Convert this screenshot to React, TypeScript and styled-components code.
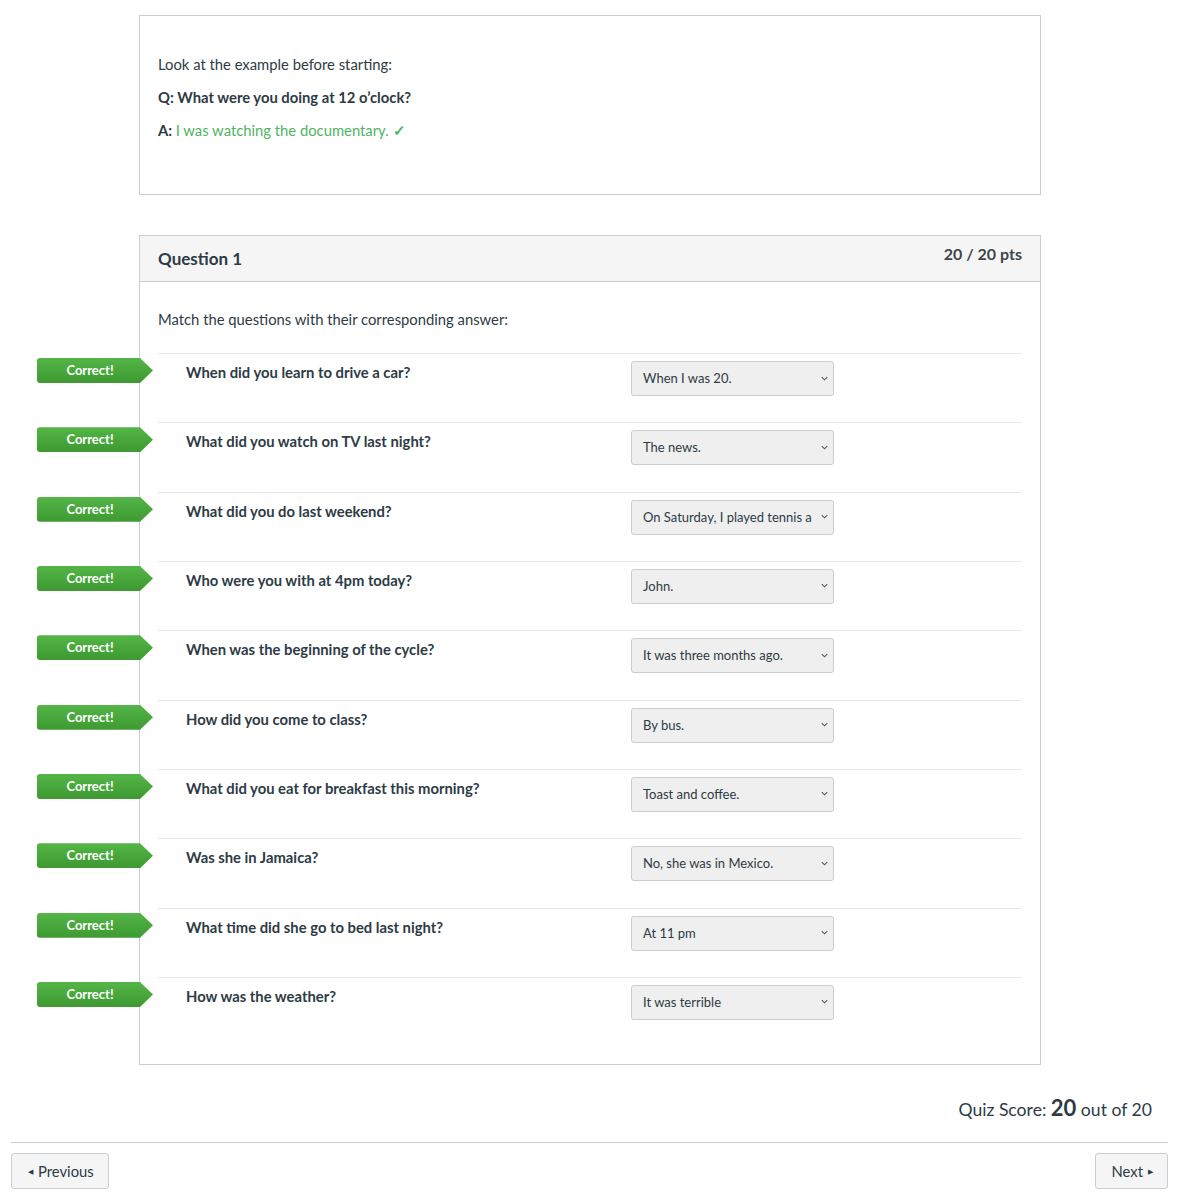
import styled, { createGlobalStyle } from "styled-components";

const GlobalStyle = createGlobalStyle`
  html, body {
    margin: 0;
    padding: 0;
    background: #fff;
  }
  body {
    font-family: Lato, "Liberation Sans", Arial, sans-serif;
    color: #2d3b45;
  }
  * { box-sizing: border-box; }
`;

// ─── Page ─────────────────────────────────────────────────────
const Page = styled.div`
  padding: 15px 32px 11px 11px;
`;

const Column = styled.div`
  margin-left: 128px;
  width: 902px;
  display: flex;
  flex-direction: column;
  gap: 40px;
`;

// ─── Example box ──────────────────────────────────────────────
const ExampleBox = styled.div`
  border: 1px solid #c7cdd1;
  padding: 37px 18px 42px;
  height: 180px;
`;

const Line = styled.p`
  margin: 0 0 11px;
  font-size: 14.8px;
  line-height: 22px;
`;

const Strong = styled.span`
  font-weight: 700;
`;

const Answer = styled.span`
  color: #4fb463;
`;

const Check = styled.span`
  font-weight: 700;
`;

// ─── Question box ─────────────────────────────────────────────
const QuestionBox = styled.div`
  border: 1px solid #c7cdd1;
`;

const Header = styled.div`
  display: flex;
  justify-content: space-between;
  align-items: flex-start;
  height: 46px;
  padding: 11px 18px 0;
  background: #f5f5f5;
  border-bottom: 1px solid #c7cdd1;
`;

const Title = styled.div`
  font-size: 17px;
  font-weight: 700;
  line-height: 24px;
  color: #2d3b45;
`;

const Points = styled.div`
  font-size: 16px;
  font-weight: 700;
  line-height: 20px;
  margin-top: -3px;
  color: #3d454c;
`;

const Body = styled.div`
  padding: 26px 18px 18px;
`;

const Prompt = styled.p`
  margin: 0 0 23px;
  font-size: 14.8px;
  line-height: 22px;
`;

const Row = styled.div`
  position: relative;
  display: grid;
  grid-template-columns: 473px 203px;
  height: 69.33px;
  border-top: 1px solid #e6e6e6;
  padding-top: 7px;
`;

const QText = styled.div`
  padding-left: 28px;
  font-size: 14.8px;
  font-weight: 700;
  line-height: 22px;
`;

const Select = styled.div`
  display: flex;
  align-items: center;
  justify-content: space-between;
  height: 35px;
  padding: 0 4px 1px 11px;
  background: #efefef;
  border: 1px solid #c7cdd1;
  border-radius: 3px;
  font-size: 13px;
  color: #2d3b45;
  white-space: nowrap;
`;

const Badge = styled.div`
  position: absolute;
  left: -121px;
  top: 4px;
  width: 116px;
  height: 25px;
  padding: 0 10px 1px 0;
  display: flex;
  align-items: center;
  justify-content: center;
  background: linear-gradient(#55b548, #3c9a30);
  clip-path: polygon(0 0, 103px 0, 100% 50%, 103px 100%, 0 100%);
  border-radius: 3px 0 0 3px;
  color: #fff;
  font-size: 13px;
  font-weight: 700;
`;

// ─── Footer ───────────────────────────────────────────────────
const Score = styled.div`
  text-align: right;
  padding: 30px 16px 19px 0;
  font-size: 17.6px;
  line-height: 26px;
  border-bottom: 1px solid #c7cdd1;
`;

const ScoreNum = styled.span`
  font-size: 22px;
  font-weight: 700;
`;

const Nav = styled.div`
  display: flex;
  justify-content: space-between;
  padding-top: 10px;
`;

const NavButton = styled.button`
  display: flex;
  align-items: center;
  gap: 5px;
  height: 36px;
  padding: 0 14px 0 16px;
  background: #f5f5f5;
  border: 1px solid #c7cdd1;
  border-radius: 3px;
  font-family: inherit;
  font-size: 14.8px;
  color: #2d3b45;
`;

const Tri = styled.span`
  font-size: 7px;
`;

const Chevron = () => (
  <svg width="9" height="9" viewBox="0 0 10 10">
    <path d="M2 3.5 L5 6.5 L8 3.5" fill="none" stroke="#555" strokeWidth="1.2" />
  </svg>
);

const ITEMS = [
  ["When did you learn to drive a car?", "When I was 20."],
  ["What did you watch on TV last night?", "The news."],
  ["What did you do last weekend?", "On Saturday, I played tennis a"],
  ["Who were you with at 4pm today?", "John."],
  ["When was the beginning of the cycle?", "It was three months ago."],
  ["How did you come to class?", "By bus."],
  ["What did you eat for breakfast this morning?", "Toast and coffee."],
  ["Was she in Jamaica?", "No, she was in Mexico."],
  ["What time did she go to bed last night?", "At 11 pm"],
  ["How was the weather?", "It was terrible"],
];

export default function App() {
  return (
    <>
      <GlobalStyle />
      <Page>
        <Column>
          <ExampleBox>
            <Line>Look at the example before starting:</Line>
            <Line>
              <Strong>Q: What were you doing at 12 o’clock?</Strong>
            </Line>
            <Line>
              <Strong>A: </Strong>
              <Answer>
                I was watching the documentary. <Check>✓</Check>
              </Answer>
            </Line>
          </ExampleBox>

          <QuestionBox>
            <Header>
              <Title>Question 1</Title>
              <Points>20 / 20 pts</Points>
            </Header>
            <Body>
              <Prompt>Match the questions with their corresponding answer:</Prompt>
              {ITEMS.map(([q, a]) => (
                <Row key={q}>
                  <Badge>Correct!</Badge>
                  <QText>{q}</QText>
                  <Select>
                    <span>{a}</span>
                    <Chevron />
                  </Select>
                </Row>
              ))}
            </Body>
          </QuestionBox>
        </Column>

        <Score>
          Quiz Score: <ScoreNum>20</ScoreNum> out of 20
        </Score>
        <Nav>
          <NavButton>
            <Tri>◀</Tri>Previous
          </NavButton>
          <NavButton>
            Next<Tri>▶</Tri>
          </NavButton>
        </Nav>
      </Page>
    </>
  );
}
